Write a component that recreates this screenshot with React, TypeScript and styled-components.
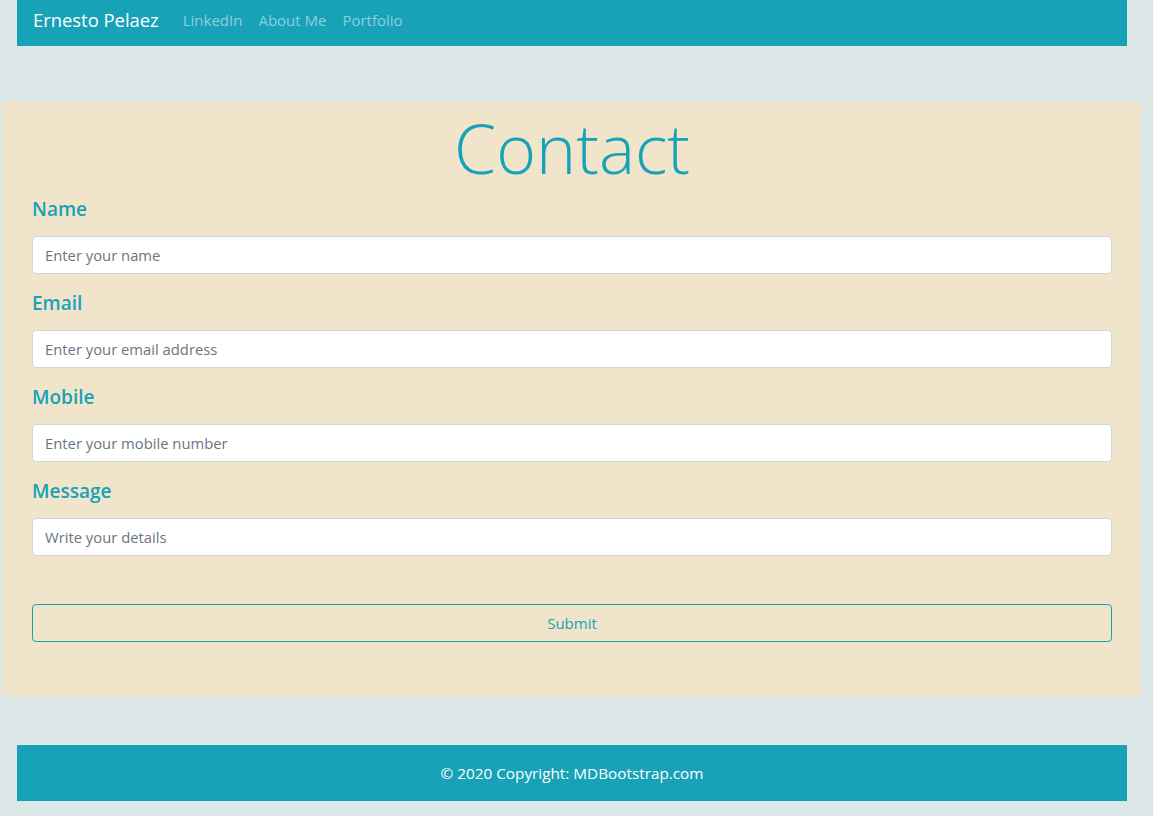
import React from "react";
import styled, { createGlobalStyle } from "styled-components";

const Global = createGlobalStyle`
  html, body { margin: 0; padding: 0; background: #dce7e7; }
  body { font-family: "Open Sans", "Noto Sans", sans-serif; color: #212529; }
  * { box-sizing: border-box; }
`;

const Page = styled.div`
  width: 1153px;
  min-height: 816px;
  display: flex;
  flex-direction: column;
`;

const Navbar = styled.nav`
  margin-left: 17px;
  width: 1110px;
  height: 46px;
  background: #17a2b8;
  display: flex;
  align-items: center;
  padding: 0 16px;
`;

const Brand = styled.a`
  color: #ffffff;
  font-size: 18.4px;
  line-height: 30px;
  margin-right: 16px;
  text-decoration: none;
  margin-top: -6px;
`;

const NavLink = styled.a`
  color: rgba(255, 255, 255, 0.5);
  font-size: 15px;
  line-height: 24px;
  padding: 0 8px;
  text-decoration: none;
  margin-top: -6px;
`;

const Section = styled.section`
  margin: 56px 0 0 2px;
  width: 1139px;
  background: #f0e4cb;
  padding: 0 29px 55px 30px;
`;

const Title = styled.h1`
  margin: 0 0 8px;
  text-align: center;
  color: #17a2b8;
  font-size: 68px;
  font-weight: 300;
  line-height: 86px;
  padding-top: 3px;
  height: 86px;
`;

const Form = styled.form`
  display: flex;
  flex-direction: column;
`;

const Group = styled.div`
  display: flex;
  flex-direction: column;
  margin-bottom: 16px;
`;

const Label = styled.label`
  color: #17a2b8;
  font-size: 19px;
  font-weight: 600;
  line-height: 24px;
  margin-bottom: 16px;
  padding-top: 1px;
  height: 24px;
`;

const Input = styled.input`
  height: 38px;
  width: 100%;
  border: 1px solid #ced4da;
  border-radius: 4px;
  background: #fff;
  padding: 6px 12px;
  font-family: inherit;
  font-size: 14.8px;
  color: #495057;
  &::placeholder { color: #6c757d; opacity: 1; }
`;

const Submit = styled.button`
  margin-top: 32px;
  height: 38px;
  width: 100%;
  border: 1px solid #17a2b8;
  border-radius: 4px;
  background: transparent;
  color: #17a2b8;
  font-family: inherit;
  font-size: 15px;
`;

const Footer = styled.footer`
  margin: 48px 0 0 17px;
  width: 1110px;
  height: 56px;
  background: #17a2b8;
  color: #ffffff;
  display: flex;
  align-items: center;
  justify-content: center;
  font-size: 15.3px;
`;

const fields = [
  { label: "Name", ph: "Enter your name" },
  { label: "Email", ph: "Enter your email address" },
  { label: "Mobile", ph: "Enter your mobile number" },
  { label: "Message", ph: "Write your details" },
];

export default function App() {
  return (
    <Page>
      <Global />
      <Navbar>
        <Brand href="#">Ernesto Pelaez</Brand>
        <NavLink href="#">LinkedIn</NavLink>
        <NavLink href="#">About Me</NavLink>
        <NavLink href="#">Portfolio</NavLink>
      </Navbar>
      <Section>
        <Title>Contact</Title>
        <Form onSubmit={(e) => e.preventDefault()}>
          {fields.map((f) => (
            <Group key={f.label}>
              <Label>{f.label}</Label>
              <Input placeholder={f.ph} />
            </Group>
          ))}
          <Submit type="submit">Submit</Submit>
        </Form>
      </Section>
      <Footer>© 2020 Copyright: MDBootstrap.com</Footer>
    </Page>
  );
}
